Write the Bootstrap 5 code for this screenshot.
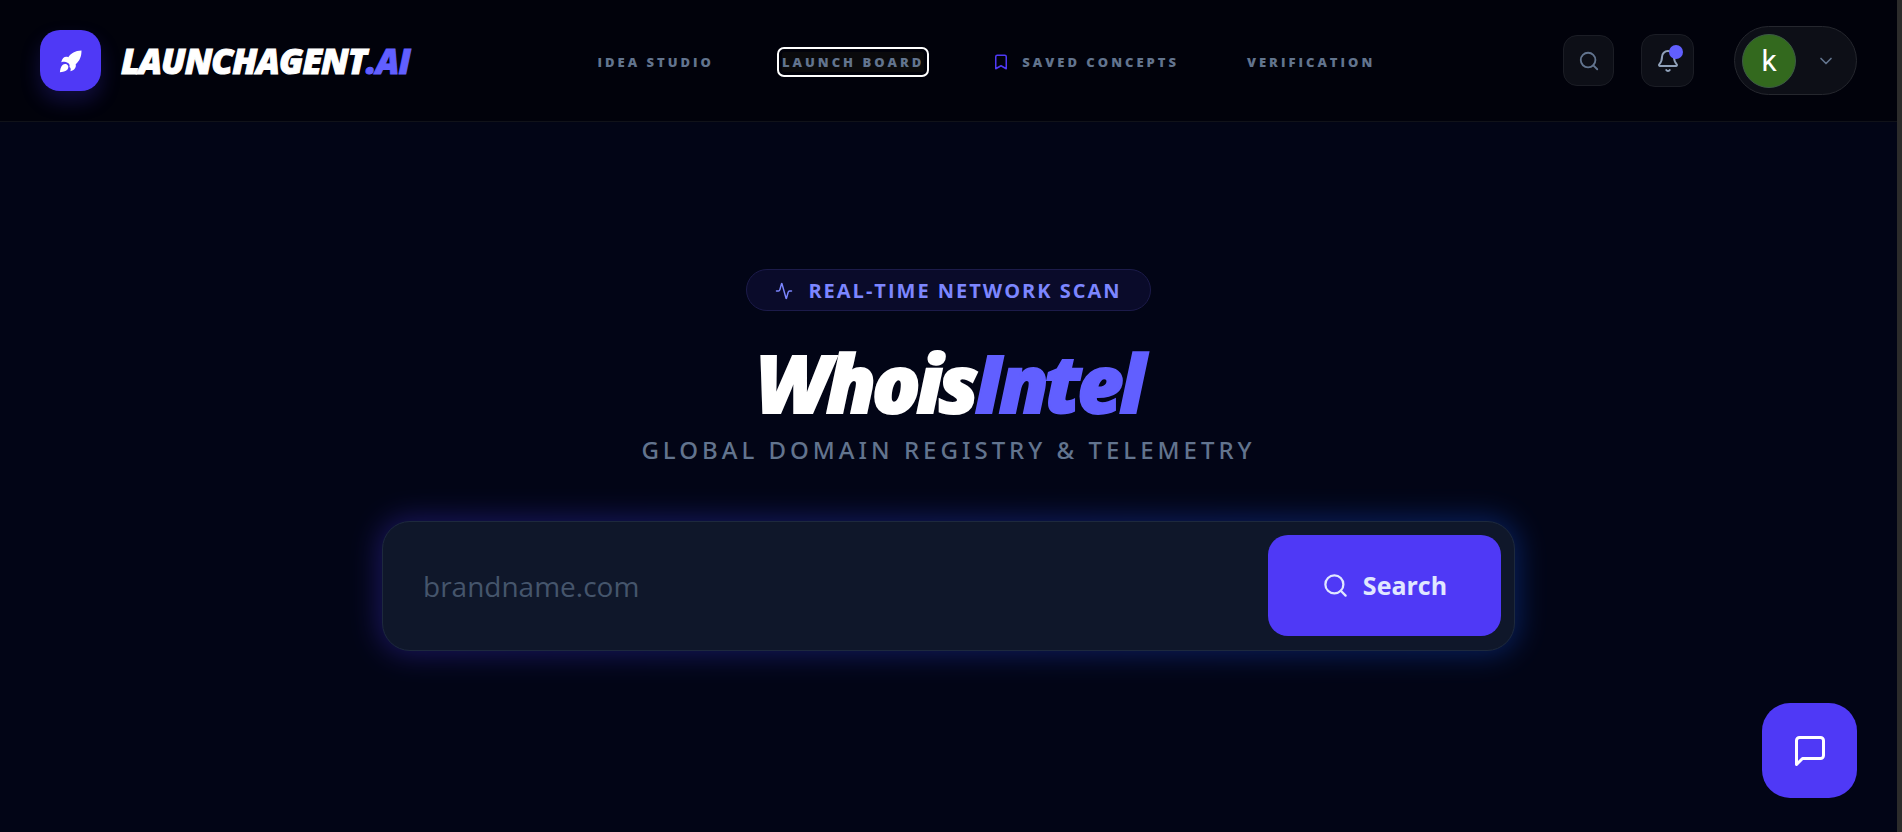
<!DOCTYPE html>
<html lang="en">
<head>
<meta charset="utf-8">
<meta name="viewport" content="width=device-width, initial-scale=1">
<title>WhoisIntel – LaunchAgent.AI</title>
<link href="https://cdn.jsdelivr.net/npm/bootstrap@5.3.0/dist/css/bootstrap.min.css" rel="stylesheet">
<style>
  :root { --brand: #4f39f6; --brand-light: #615fff; --slate: #62748e; }
  body { background: #020516; font-family: "Open Sans", "Noto Sans", sans-serif; color: #fff; border-right: 5px solid #2c2c2b; }
  a { text-decoration: none; }
  svg { fill: none; stroke: currentColor; stroke-width: 2; stroke-linecap: round; stroke-linejoin: round; flex: none; display: block; }
  .topbar { background: #01020b; border-bottom: 1px solid #101219; padding: 26px 40px; }
  .brand-link { gap: 20px; }
  .logo-tile { width: 61px; height: 61px; border-radius: 20px; background: var(--brand); box-shadow: 0 10px 20px rgba(79,57,246,.22); }
  .logo-tile svg { fill: #fff; stroke: none; }
  .brand-name { font-size: 35px; line-height: 40px; font-weight: 800; font-style: italic; letter-spacing: -1px; color: #fff; -webkit-text-stroke: 1px currentColor; }
  .accent { color: var(--brand-light); }
  .menu { gap: 68px; padding-top: 2px; }
  .menu a { color: var(--slate); font-size: 13px; line-height: 20px; font-weight: 800; letter-spacing: 3px; white-space: nowrap; }
  .menu a.focused { outline: 2px solid #fff; outline-offset: 3px; border-radius: 2px; background: #0a0a0c; }
  .menu .saved { gap: 12px; }
  .menu svg { color: var(--brand); }
  .tool { width: 51px; height: 51px; padding: 0; border: 1px solid #1b1d25; border-radius: 14px; background: #0d0f17; color: var(--slate); }
  .tool.bell { width: 53px; height: 53px; color: #90a1b9; margin-left: 27px; }
  .dot { position: absolute; top: 10px; right: 10px; width: 14px; height: 14px; border-radius: 50%; background: var(--brand-light); }
  .account { height: 69px; width: 123px; padding: 0 20px 0 7px; border: 1px solid #25272e; border-radius: 35px; background: #0d0f17; color: var(--slate); margin-left: 40px; }
  .avatar { width: 54px; height: 54px; border-radius: 50%; background: #33691e; border: 1px solid #3c5a45; color: #fff; font: 400 30px/52px Roboto, sans-serif; }
  .hero { padding: 147px 24px 40px; }
  .scan { height: 42px; padding: 2px 28px 0; gap: 15px; border: 1px solid #1c1b4a; border-radius: 21px; background: #0a0b2a; color: #7c86ff; font-size: 20px; line-height: 28px; font-weight: 700; letter-spacing: 2px; }
  h1 { font-size: 80px; line-height: 80px; font-weight: 800; font-style: italic; letter-spacing: -4px; margin: 31px 0 0; -webkit-text-stroke: 2px currentColor; }
  .tagline { font-family: "Noto Sans", sans-serif; font-size: 24px; line-height: 32px; font-weight: 500; letter-spacing: 4px; color: var(--slate); margin: 12px 0 0; }
  .search-wrap { position: relative; width: 100%; max-width: 1133px; margin-top: 55px; }
  .search-wrap::before { content: ""; position: absolute; inset: -4px; border-radius: 32px; background: linear-gradient(90deg, #4f39f6, #155dfc); filter: blur(14px); opacity: .3; }
  .search-box { position: relative; height: 130px; border: 1px solid #1d293d; border-radius: 28px; background: #0f172a; padding: 13px; }
  .search-box input { background: transparent; border: 0; color: #fff; font-size: 28px; padding: 0 27px; min-width: 0; }
  .search-box input:focus { background: transparent; box-shadow: none; color: #fff; }
  .search-box input::placeholder { color: #45556c; opacity: 1; }
  .search-box button { width: 233px; flex: none; border: 0; border-radius: 20px; background: var(--brand); color: #e0e7ff; font-size: 25px; font-weight: 700; gap: 14px; height: 101px; }
  .chat { width: 95px; height: 95px; right: 45px; bottom: 34px; border: 0; border-radius: 28px; background: var(--brand); color: #fff; }
</style>
</head>
<body class="min-vh-100">
<header class="topbar d-flex align-items-center justify-content-between">
  <a href="#" class="brand-link d-inline-flex align-items-center">
    <span class="logo-tile d-flex align-items-center justify-content-center">
      <svg width="24" height="24" viewBox="0 0 24 24"><path d="M22.5 1.5C16 1.5 12 4.5 9.300 8.200 6 7 3.500 8.500 2.200 13.200 5 12.400 7 12.600 8 13.600 10.300 14.200 11 16 10.500 18 11.800 19 12 20 11.400 22.300 15.500 21 17.500 18.500 16.700 15.200 20.500 12 22.500 8 22.500 1.500Z"/><path d="M7.600 15.200C9.500 16 10 18.500 8.500 20.500 6.800 22.300 3.500 23 .900 23.200 1.200 20.500 1.700 17.800 3.500 16 4.600 14.900 6.200 14.700 7.600 15.200Z"/></svg>
    </span>
    <span class="brand-name">LAUNCHAGENT<span class="accent">.AI</span></span>
  </a>
  <nav class="menu d-flex align-items-center" aria-label="Main">
    <a href="#">IDEA STUDIO</a>
    <a href="#" class="focused">LAUNCH BOARD</a>
    <a href="#" class="saved d-flex align-items-center"><svg width="18" height="18" viewBox="0 0 24 24"><path d="m19 21-7-4-7 4V5a2 2 0 0 1 2-2h10a2 2 0 0 1 2 2z"/></svg>SAVED CONCEPTS</a>
    <a href="#">VERIFICATION</a>
  </nav>
  <div class="d-flex align-items-center">
    <button type="button" class="tool d-flex align-items-center justify-content-center" aria-label="Search"><svg width="22" height="22" viewBox="0 0 24 24"><circle cx="11" cy="11" r="8"/><path d="m21 21-4.300-4.300"/></svg></button>
    <button type="button" class="tool bell position-relative d-flex align-items-center justify-content-center" aria-label="Notifications"><svg width="24" height="24" viewBox="0 0 24 24"><path d="M10.268 21a2 2 0 0 0 3.464 0"/><path d="M3.262 15.326A1 1 0 0 0 4 17h16a1 1 0 0 0 .740-1.673C19.410 13.956 18 12.499 18 8A6 6 0 0 0 6 8c0 4.499-1.411 5.956-2.738 7.326"/></svg><span class="dot"></span></button>
    <button type="button" class="account d-flex align-items-center justify-content-between" aria-label="Account menu"><span class="avatar">k</span><svg width="20" height="20" viewBox="0 0 24 24"><path d="m6 9 6 6 6-6"/></svg></button>
  </div>
</header>
<main class="hero d-flex flex-column align-items-center">
  <div class="scan d-inline-flex align-items-center"><svg width="18" height="18" viewBox="0 0 24 24"><path d="M22 12h-2.480a2 2 0 0 0-1.930 1.460l-2.350 8.360a.25.25 0 0 1-.480 0L9.240 2.180a.25.25 0 0 0-.480 0l-2.350 8.360A2 2 0 0 1 4.490 12H2"/></svg>REAL-TIME NETWORK SCAN</div>
  <h1>Whois<span class="accent">Intel</span></h1>
  <p class="tagline">GLOBAL DOMAIN REGISTRY &amp; TELEMETRY</p>
  <div class="search-wrap">
    <form class="search-box d-flex">
      <input type="text" class="form-control" placeholder="brandname.com" aria-label="Domain name">
      <button type="submit" class="d-flex align-items-center justify-content-center"><svg width="27" height="27" viewBox="0 0 24 24"><circle cx="11" cy="11" r="8"/><path d="m21 21-4.300-4.300"/></svg>Search</button>
    </form>
  </div>
</main>
<button type="button" class="chat position-fixed d-flex align-items-center justify-content-center" aria-label="Open chat"><svg width="36" height="36" viewBox="0 0 24 24"><path d="M21 15a2 2 0 0 1-2 2H7l-4 4V5a2 2 0 0 1 2-2h14a2 2 0 0 1 2 2z"/></svg></button>
<script src="https://cdn.jsdelivr.net/npm/bootstrap@5.3.0/dist/js/bootstrap.bundle.min.js"></script>
</body>
</html>
